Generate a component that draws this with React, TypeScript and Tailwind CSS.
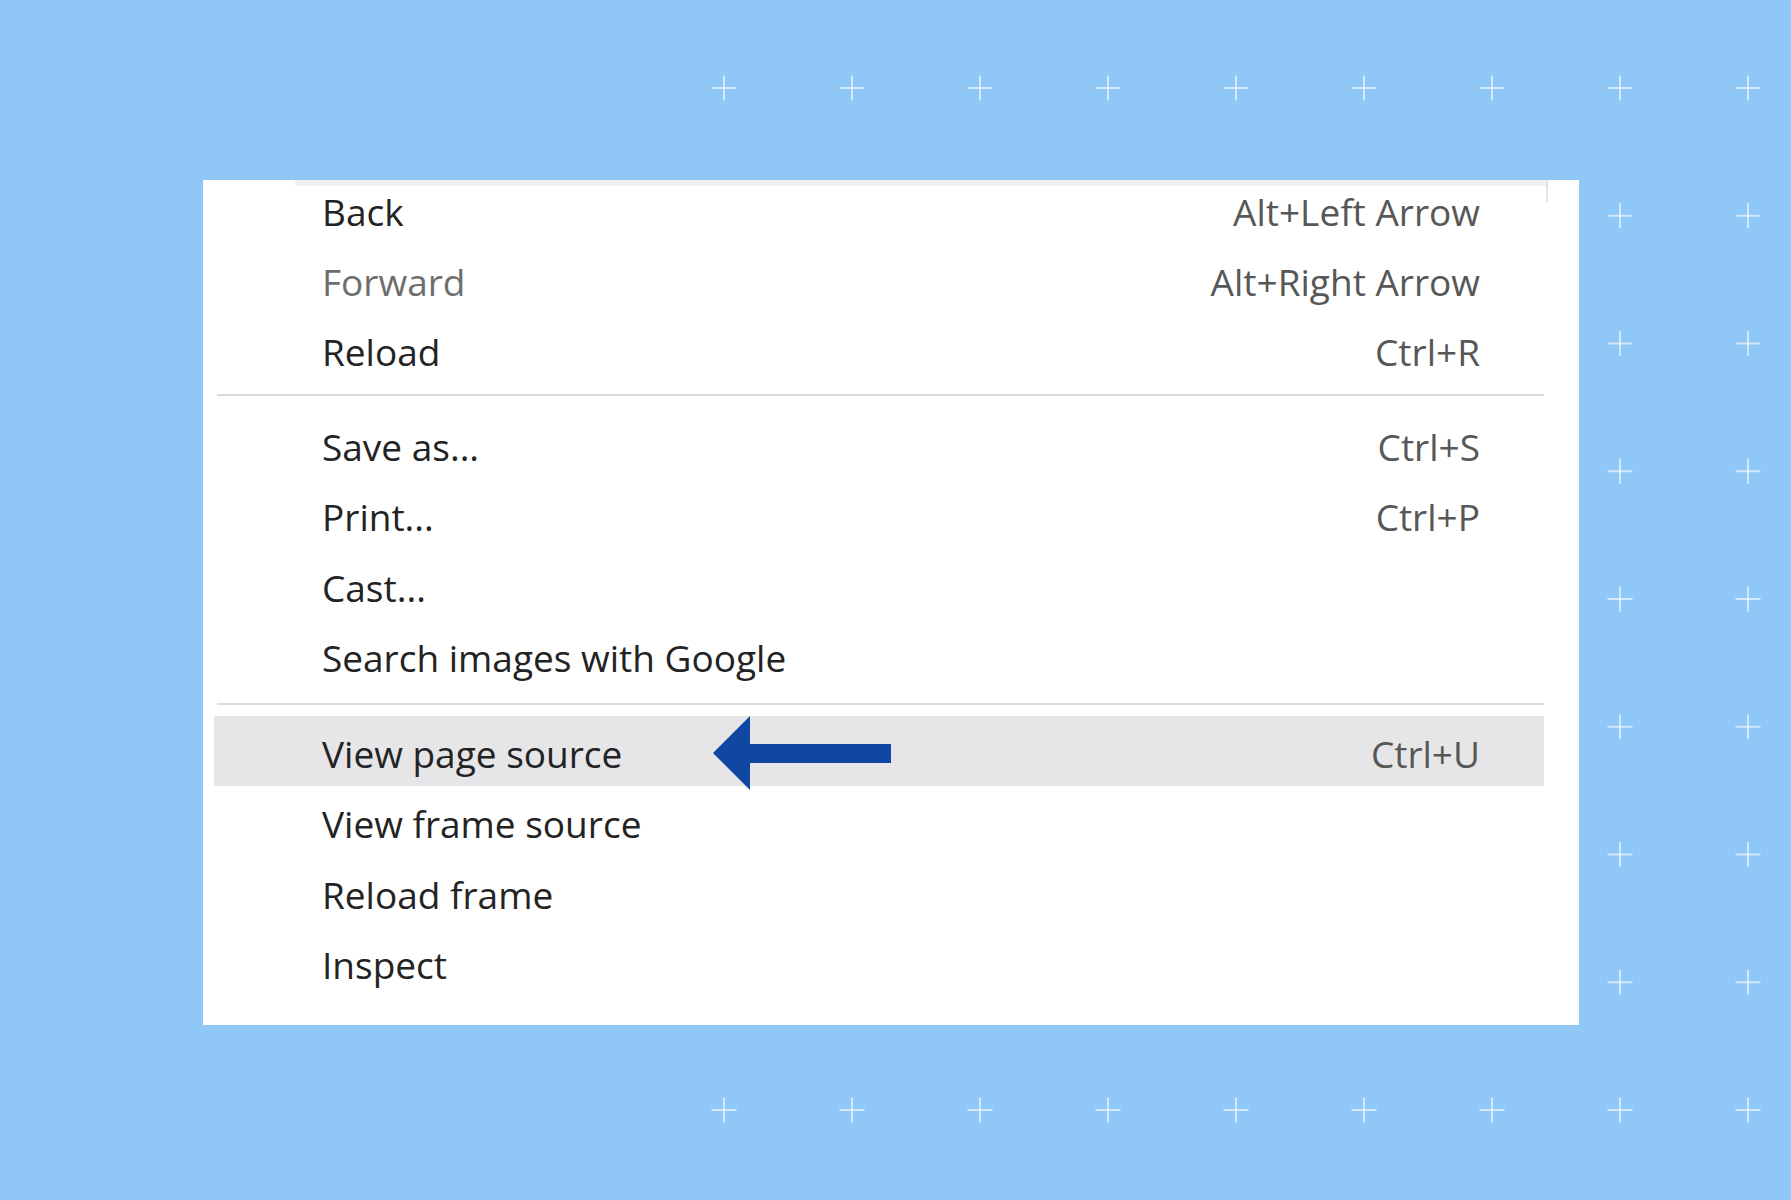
import React from "react";

type Row = { label: string; shortcut?: string; h: string; disabled?: boolean; highlight?: boolean; extra?: string };

const group1: Row[] = [
  { label: "Back", shortcut: "Alt+Left Arrow", h: "h-[58px]", extra: "pb-[12px]" },
  { label: "Forward", shortcut: "Alt+Right Arrow", h: "h-[70px]", disabled: true },
  { label: "Reload", shortcut: "Ctrl+R", h: "h-[70px]" },
];
const group2: Row[] = [
  { label: "Save as...", shortcut: "Ctrl+S", h: "h-[70px]" },
  { label: "Print...", shortcut: "Ctrl+P", h: "h-[71px]" },
  { label: "Cast...", h: "h-[70px]" },
  { label: "Search images with Google", h: "h-[71px]" },
];
const group3: Row[] = [
  { label: "View page source", shortcut: "Ctrl+U", h: "h-[70px]", highlight: true },
  { label: "View frame source", h: "h-[71px]" },
  { label: "Reload frame", h: "h-[70px]" },
  { label: "Inspect", h: "h-[71px]" },
];

function MenuRow({ row }: { row: Row }) {
  return (
    <div
      className={`relative flex items-center justify-between pt-[5px] pl-[108px] pr-[64px] ${row.h} ${row.extra ?? ""} ${
        row.highlight ? "bg-[#e6e6e9]" : ""
      }`}
    >
      <span className={row.disabled ? "text-[#6e6e6e]" : "text-[#232323]"}>{row.label}</span>
      {row.shortcut && <span className="text-[#575757]">{row.shortcut}</span>}
      {row.highlight && (
        <svg
          className="absolute left-[499px] top-0"
          width="178"
          height="74"
          viewBox="0 0 178 74"
        >
          <polygon points="0,37 37,0 37,28 178,28 178,47 37,47 37,74" fill="#0f47a3" />
        </svg>
      )}
    </div>
  );
}

function Separator({ pt, pb }: { pt: string; pb: string }) {
  return (
    <div className={`${pt} ${pb}`}>
      <div className="ml-[3px] h-[2px] bg-[#dadada]" />
    </div>
  );
}

function Plus({ x, y }: { x: number; y: number }) {
  return (
    <g stroke="#ffffff" strokeOpacity="0.6" strokeWidth="2">
      <line x1={x - 12.5} y1={y} x2={x + 12.5} y2={y} />
      <line x1={x} y1={y - 12.5} x2={x} y2={y + 12.5} />
    </g>
  );
}

export default function App() {
  const xs = Array.from({ length: 9 }, (_, i) => 724 + 128 * i);
  const ys = Array.from({ length: 9 }, (_, j) => 88 + 127.75 * j);
  return (
    <div
      className="relative w-[1791px] h-[1200px] overflow-hidden bg-[#8fc7f7]"
      style={{ fontFamily: '"Open Sans", "Noto Sans", sans-serif' }}
    >
      <svg className="absolute inset-0" width="1791" height="1200">
        {ys.map((y) => xs.map((x) => <Plus key={`${x}-${y}`} x={x} y={y} />))}
      </svg>
      <div className="relative pt-[180px] pl-[203px]">
        <div className="w-[1376px] h-[845px] bg-white text-[37px] leading-[50px]">
          <div className="relative h-[6px] ml-[92px] w-[1253px] bg-[#f1f1f1]">
            <div className="absolute right-0 top-0 h-[22px] w-[2px] bg-[#e4e4e4]" />
          </div>
          <div className="ml-[11px] w-[1330px]">
            {group1.map((r) => (
              <MenuRow key={r.label} row={r} />
            ))}
            <Separator pt="pt-[10px]" pb="pb-[13px]" />
            {group2.map((r) => (
              <MenuRow key={r.label} row={r} />
            ))}
            <Separator pt="pt-[12px]" pb="pb-[11px]" />
            {group3.map((r) => (
              <MenuRow key={r.label} row={r} />
            ))}
          </div>
        </div>
      </div>
    </div>
  );
}
